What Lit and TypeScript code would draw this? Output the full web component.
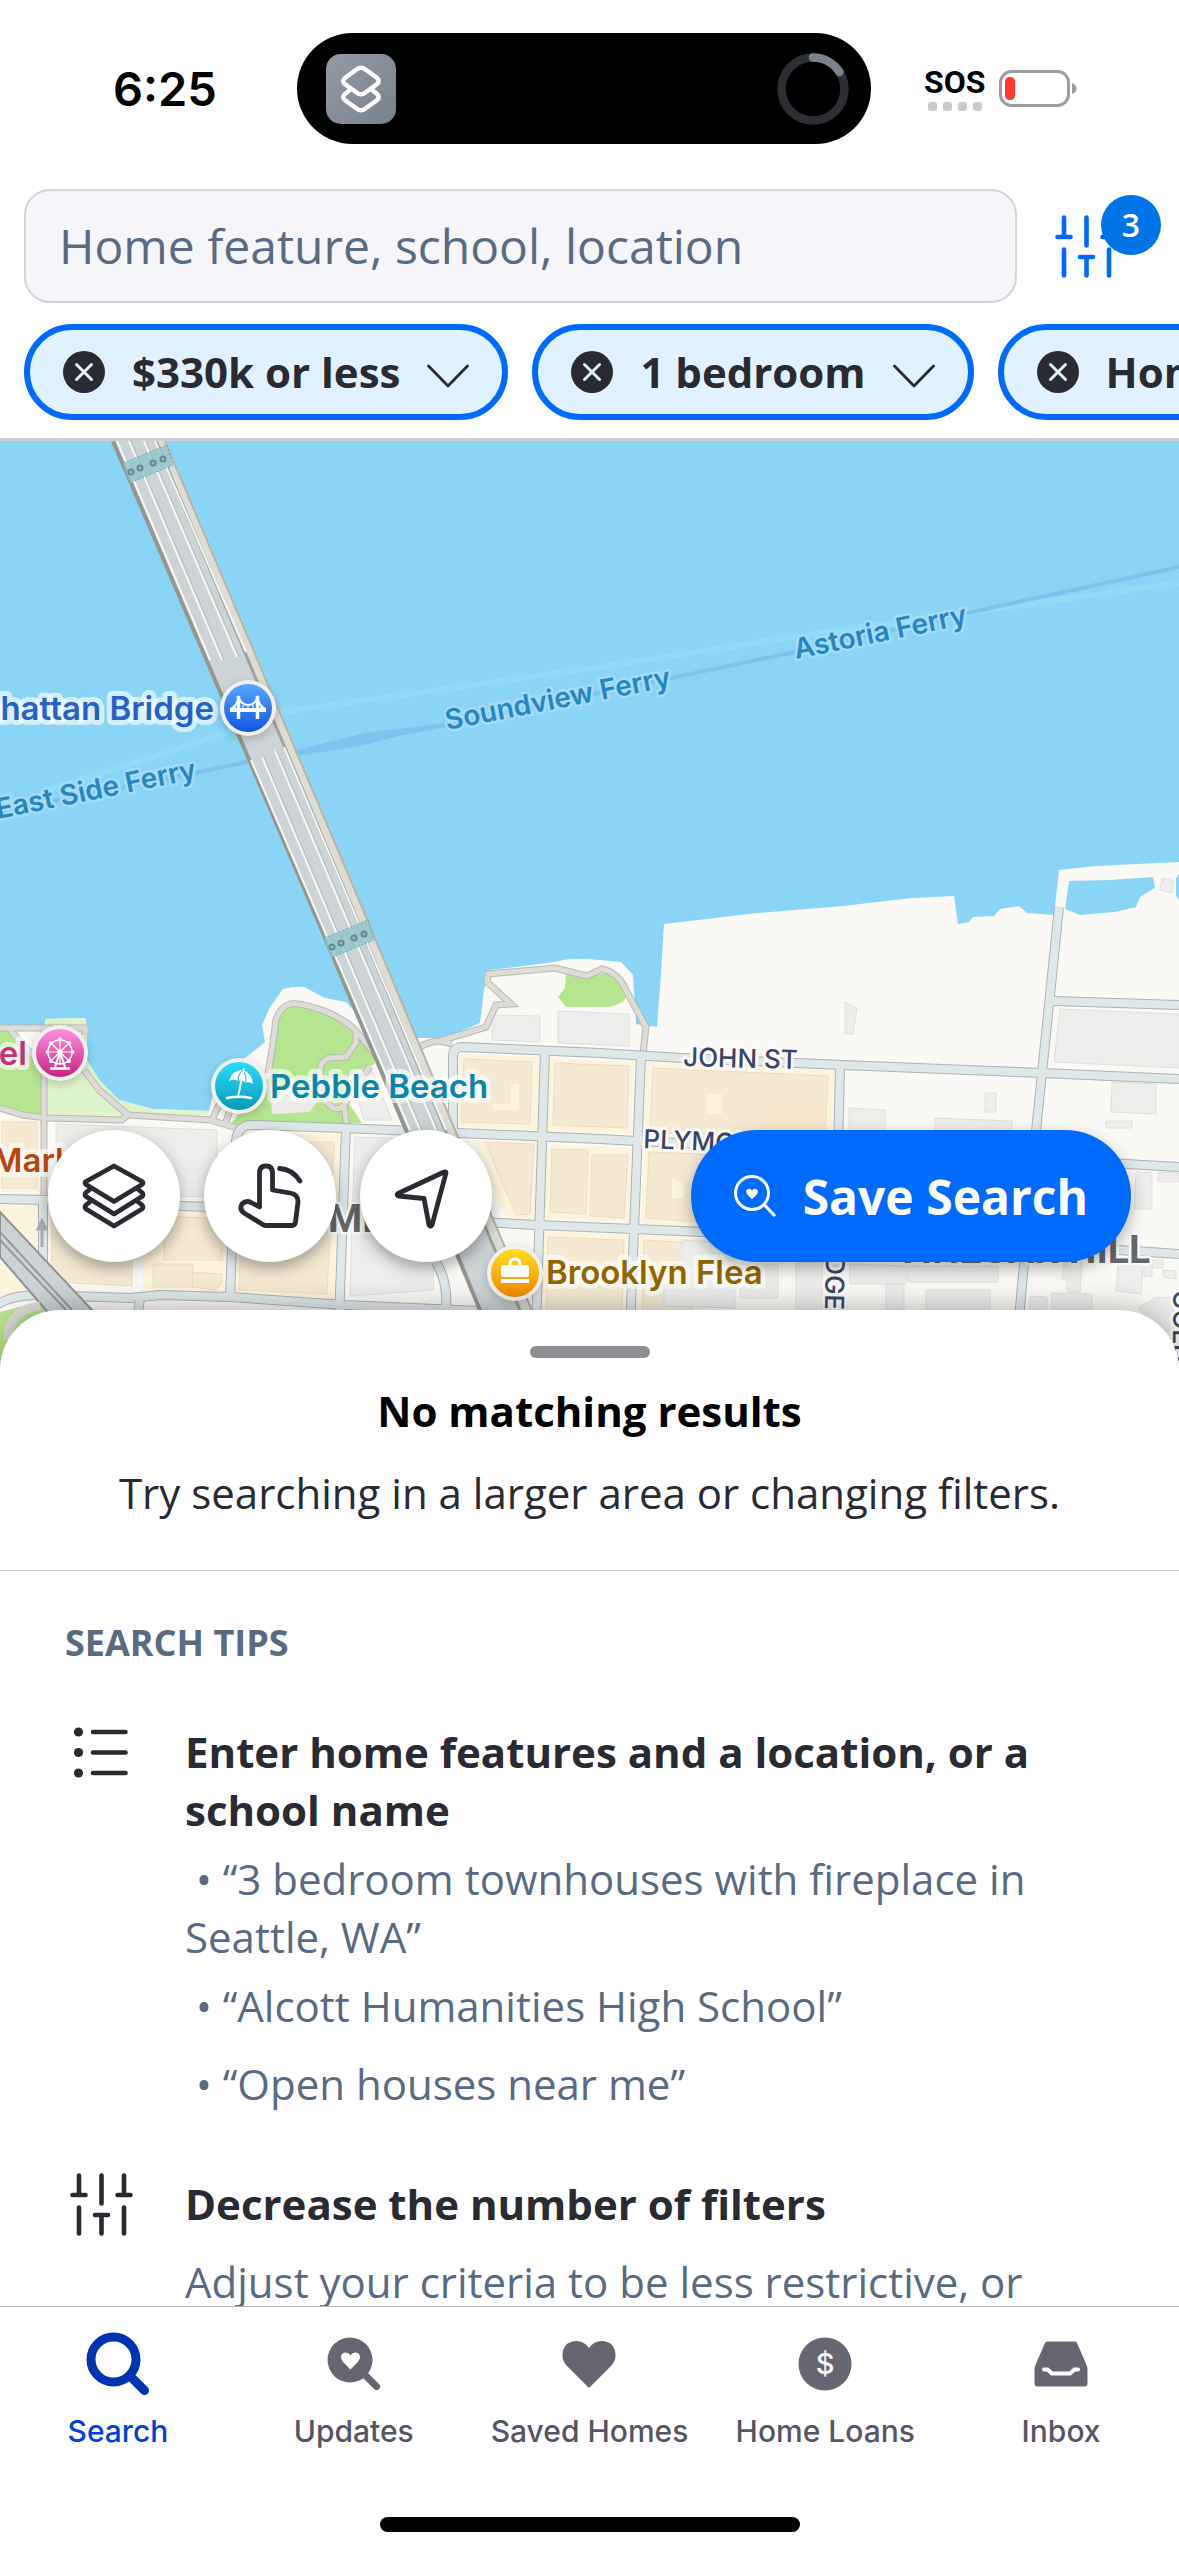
import { LitElement, html, svg, css } from "lit";
import { customElement, property } from "lit/decorators.js";

const HEART = "M0 8.5 C-3 5 -9.5 0 -9.5 -3.8 C-9.5 -9.3 -2.2 -10 0 -5.2 C2.2 -10 9.5 -9.3 9.5 -3.8 C9.5 0 3 5 0 8.5Z";

const slidersIcon = html`
  <svg class="sliders" viewBox="0 0 63 63" aria-hidden="true">
    <path d="M9 2.5V21M2.5 22H15.500M9 34.500V60.500M31.500 2.500V30.500M25 42H38M31.500 42V60.500M54 2.500V21M47.500 22H60.500M54 34.500V60.500"
      fill="none" stroke="currentColor" stroke-width="4.600" stroke-linecap="round" />
  </svg>`;

const listIcon = html`
  <svg class="list-icon" viewBox="0 0 63 63" aria-hidden="true">
    <g fill="currentColor">
      <circle cx="8.500" cy="11" r="4.600" /><circle cx="8.500" cy="31.500" r="4.600" /><circle cx="8.500" cy="52" r="4.600" />
    </g>
    <path d="M23 11H55.500M23 31.500H55.500M23 52H55.500" stroke="currentColor" stroke-width="4.600" stroke-linecap="round" />
  </svg>`;

/* ---------- map ---------- */

const STREETS = [
  "M453 1145V1056Q453 1047 463 1047L600 1053L682 1058L843 1065L1042 1073L1179 1079",
  "M236 1150Q234 1125 252 1125L344 1128L459 1133L600 1139L636 1141L1126 1164L1179 1167",
  "M0 1199L46 1200L230 1208L344 1214L536 1225L634 1229L1119 1250L1179 1254",
  "M-5 1306Q10 1295 40 1295L130 1298L160 1295L230 1297L344 1305L480 1311",
  "M43 1200V1295",
  "M236 1145L230 1298",
  "M346 1128L339 1320",
  "M545 1051L536 1330",
  "M641 1057L630 1330",
  "M840 1065L834 1330",
  "M1059 907L1042 1073L1036 1131L1018 1330",
  "M1053 1001L1179 1005",
  "M436 1262Q448 1282 446 1308",
  "M140 1298L136 1330",
  "M1018 1380L1179 1386",
];

const PATHS = [
  "M0 1028H85V1035",
  "M44 1028V1195",
  "M10 1030L44 1068",
  "M84 1070L99 1090L128 1115L122 1120L46 1118L23 1115L0 1108",
  "M128 1115L210 1120L237 1128",
  "M212 1120L222 1098M225 1124L232 1105",
  "M268 1073L272 1050L276 1020Q280 1007 290 1004Q302 1002 329 1013Q348 1022 356 1031L380 1060",
  "M356 1031V1043L346 1057L329 1058Q320 1062 320 1070L322 1095Q334 1116 344 1105L370 1066M344 1105L347 1128",
  "M417 1050Q424 1042 440 1041L452 1044M440 1041L486 1027L496 1005L511 1004L487 982L488 974L555 968L587 976L602 969Q614 972 621 981L646 1027L643 1054",
];

const CREAM = [
  "M459 1054L540 1057L538 1131L457 1127Z",
  "M550 1058L634 1062L631 1134L548 1131Z",
  "M647 1062L835 1070L832 1144L644 1136Z",
  "M472 1140L538 1142L534 1219L512 1232Z",
  "M548 1145L634 1147L630 1222L544 1219Z",
  "M645 1147L830 1155L828 1232L641 1225Z",
  "M543 1231L628 1235L626 1320L540 1320Z",
  "M640 1235L700 1238L700 1320H636Z",
  "M238 1132L340 1134L334 1300L236 1294Z",
  "M50 1205L226 1213V1294L143 1292V1260H133V1286L50 1282Z",
  "M0 1203L38 1206V1260L0 1215Z",
  "M0 1262L28 1290L0 1298Z",
  "M0 1120L40 1122V1192L0 1192Z",
];

const TAN = [
  "M464 1059L532 1062L530 1124L461 1122Z",
  "M555 1063L629 1066L627 1128L553 1125Z",
  "M653 1068L828 1076L825 1140L650 1132Z",
  "M485 1142L534 1144L530 1214L516 1215Z",
  "M552 1149L588 1150L586 1214L550 1212Z",
  "M592 1155L628 1155L624 1218L590 1216Z",
  "M649 1152L760 1156L750 1226L646 1218Z",
  "M548 1237L624 1240L622 1316L546 1316Z",
  "M644 1240L692 1243V1316H642Z",
  "M242 1138L300 1140V1180H242Z",
  "M306 1142L334 1142L332 1190L306 1188Z",
  "M241 1212L331 1214L327 1294L239 1290Z",
  "M52 1216L132 1218V1286L52 1282Z",
  "M164 1216L222 1219V1260H164Z",
  "M153 1264L193 1264V1287L153 1287Z",
  "M193 1272L222 1274V1282L216 1290L192 1287Z",
  "M2 1122L37 1122V1188L2 1188Z",
];

const GREY = [
  "M56 1124L217 1130V1197L56 1194Z",
  "M355 1137L418 1139L430 1200L434 1290L350 1296L352 1220Z",
  "M492 1015L540 1016V1042L492 1040Z",
  "M558 1011L629 1014V1046L558 1043Z",
  "M845 1002L857 1008L853 1034H845Z",
  "M1060 1009L1179 1014V1068L1054 1062Z",
  "M849 1108L885 1110V1132H849Z",
  "M935 1118L1012 1121V1140H935Z",
  "M985 1093H996V1112H985Z",
  "M1112 1082L1156 1084V1114L1111 1112Z",
  "M1106 1121H1132V1128H1106Z",
  "M1136 1172L1152 1173V1209H1134Z",
  "M1158 1172L1179 1173V1182H1158Z",
  "M682 1240L735 1243V1308L664 1306V1284H682Z",
  "M850 1264L906 1266V1284H850Z",
  "M740 1264H778V1298H740ZM796 1262H822V1310H796Z",
  "M886 1284H904V1310H886ZM908 1266H998V1282H908ZM926 1290H990V1310H926Z",
  "M1064 1262H1082L1080 1292H1067V1280H1062ZM1052 1293L1092 1294V1320H1052ZM1030 1296L1047 1297V1312H1030Z",
  "M1118 1266L1143 1266L1141 1294L1116 1291ZM1144 1268L1152 1264V1276L1144 1277ZM1152 1260H1163V1268H1152ZM1163 1270L1176 1271V1279L1163 1277Z",
  "M1138 1308L1155 1298L1173 1297V1331H1160Z",
  "M358 1100L372 1070L392 1120H364Z",
  "M1162 878L1174 881L1172 893L1160 890Z",
];

function place(x: number, y: number, id: string, glyph: unknown) {
  return svg`
    <g transform="translate(${x} ${y})">
      <circle r="29" fill="#000" opacity=".16" cy="3" filter="url(#soft)" />
      <circle r="28" fill="#f0f0ee" />
      <circle r="24" fill="url(#${id})" />
      ${glyph}
    </g>`;
}

const gradient = (id: string, a: string, b: string) => svg`
  <linearGradient id=${id} x1="0" y1="0" x2="0" y2="1">
    <stop offset="0" stop-color=${a} /><stop offset="1" stop-color=${b} />
  </linearGradient>`;

const tower = (x: number, y: number) => svg`
  <g transform="translate(${x} ${y})">
    <path d="M-24 -4L20 -22L26 -2L-17 16Z" fill="#93c5cb" opacity=".85" />
    <path d="M-24 -4L20 -22L26 -2L-17 16Z" fill="none" stroke="#6fa9b2" stroke-width="1" stroke-dasharray="2 2" />
    <g fill="#9fb9bd" stroke="#5f8b93" stroke-width="2">
      <circle cx="-16" cy="5" r="2.500" /><circle cx="-7" cy="1" r="2.500" /><circle cx="6" cy="-4" r="2.500" /><circle cx="16" cy="-8" r="2.500" />
    </g>
  </g>`;

@customElement("area-map")
export class AreaMap extends LitElement {
  static styles = css`
    :host { display: block; }
    svg { display: block; width: 100%; height: 100%; }
    text { font-family: Inter, "Liberation Sans", sans-serif; paint-order: stroke; stroke-linejoin: round; }
    .ferry { font-size: 28px; font-weight: 600; fill: #2686be; stroke: #a3dcf7; stroke-width: 5px; }
    .poi { font-size: 33px; font-weight: 600; stroke: #ffffff; stroke-opacity: .65; stroke-width: 10px; }
    .street { font-size: 26px; font-weight: 500; fill: #3b4465; stroke: #fbfaf6; stroke-width: 6px; }
    .district { font-family: Roboto, "Liberation Sans", sans-serif; font-size: 39px; font-weight: 700; fill: #62686b; stroke: #fafafa; stroke-width: 5px; }
    .bridge { fill: #2660c8; }
    .beach { fill: #0a86aa; }
    .flea { fill: #8f6600; }
    .wheel { fill: #c0317f; }
    .market { fill: #b8470f; }
    .end { text-anchor: end; }
  `;

  render() {
    return html`
      <svg viewBox="0 441 1179 949" preserveAspectRatio="xMidYMin slice" role="img" aria-label="Map">
        <defs>
          ${gradient("g-bridge", "#58a6ff", "#1255e0")}
          ${gradient("g-beach", "#2cdcfb", "#0899b8")}
          ${gradient("g-flea", "#ffdc1c", "#ef8a00")}
          ${gradient("g-wheel", "#ff8fe0", "#c4247f")}
          <filter id="soft" x="-40%" y="-40%" width="180%" height="180%"><feGaussianBlur stdDeviation="4" /></filter>
        </defs>
        <rect y="441" width="1179" height="949" fill="#8ad5f5" />

        <path d="M40 792L200 742L283 712L600 667L793 637L1179 583" fill="none" stroke="#8fdcf6" stroke-width="6" />
        <path d="M0 812L199 772L297 752L446 725L600 693L795 652L967 613L1179 567" fill="none" stroke="#7cc3ee" stroke-width="4" />
        <path d="M297 750L365 733L446 723L365 745L297 756Z" fill="#7cc3ee" />

        <path fill="#faf9f5" d="M0 1026H44L46 1019L86 1018L87 1060L99 1080L119 1100L153 1109L209 1111L214 1090L230 1067L249 1055L265 1042L262 1025L270 1007L283 989L292 987H304L325 998L346 1002L380 1040L415 1038H446L480 1023L484 990L490 970L524 966L547 963L570 959H589L621 962L633 975L636 1024L657 1027L661 974L664 924L698 920L740 915L759 913L843 906L912 898L954 896L958 924L969 922L973 917L994 916L1000 909L1019 906L1027 913L1054 915L1059 870L1096 866L1179 862V1390H0Z" />
        <path fill="#8ad5f5" d="M1069 881L1110 880L1153 877L1155 888L1148 892L1140 897L1136 907L1115 912L1080 915L1065 909ZM1179 874L1176 878V896L1179 900Z" />
        <path fill="#dff4cb" d="M46 1019L86 1018L87 1060L99 1080L119 1100L153 1109L209 1111L206 1121L130 1118L44 1120V1028Z" />
        <g fill="#b6e58f">
          <path d="M0 1030H11L43 1067V1115L0 1108Z" />
          <path d="M270 1076L272 1050L278 1018Q284 1005 302 1004L329 1014L352 1028L372 1052L375 1064L350 1075L344 1096L362 1123L250 1124L230 1125L240 1112Z" />
          <path d="M566 973L587 977L606 973L621 984L627 995L623 1002L610 1007H566L558 997L565 988Z" />
          <path d="M0 1312L46 1300L60 1390H0Z" />
        </g>
        <path fill="#edebe8" d="M270 1085L318 1100L310 1112L272 1114Z" />

        <g fill="#fdf4dc">${CREAM.map((d) => svg`<path d=${d} />`)}</g>
        <g fill="#f5e9d3" stroke="#ecdcc0" stroke-width="1">${TAN.map((d) => svg`<path d=${d} />`)}</g>
        <path fill="#f8e7cd" d="M775 1104L826 1107L824 1140H766V1120H775Z" />
        <path fill="#fdf4dc" d="M511 1084H519V1110H493V1104H511ZM706 1094H722V1114H706ZM672 1178L684 1184V1198H672Z" />
        <g fill="#ededeb" stroke="#dfdfdd" stroke-width="1">${GREY.map((d) => svg`<path d=${d} />`)}</g>

        <g fill="none" stroke="#b9b8b3" stroke-width="7">${PATHS.map((d) => svg`<path d=${d} />`)}</g>
        <g fill="none" stroke="#dedcd7" stroke-width="5">${PATHS.map((d) => svg`<path d=${d} />`)}</g>
        <g fill="none" stroke="#a9b4b7" stroke-width="10">${STREETS.map((d) => svg`<path d=${d} />`)}</g>
        <g fill="none" stroke="#e0e7e8" stroke-width="8">${STREETS.map((d) => svg`<path d=${d} />`)}</g>

        <path d="M0 1212L92 1310L140 1370H100L46 1310L0 1257Z" fill="#cdd3d5" stroke="#8f9497" stroke-width="2" />
        <path d="M0 1232L72 1310M0 1240L66 1310" stroke="#98999b" stroke-width="2" />
        <path d="M42 1247V1222M38 1229L42 1221L46 1229Z" stroke="#a7adaf" stroke-width="3" fill="#a7adaf" />
        <path d="M8 1340Q8 1310 40 1306" fill="none" stroke="#dedcd7" stroke-width="9" />

        <path d="M114 441L310 900L406 1130L484 1320L536 1320L453 1130L360 900L166 441Z" fill="#cdd4d5" />
        <path d="M160 441L354 900L450 1130L530 1320" fill="none" stroke="#dddcd5" stroke-width="9" />
        <path d="M165 441L359 900L455 1130L536 1320" fill="none" stroke="#b5b3aa" stroke-width="2" />
        <path d="M156 441L349 900L445 1130L524 1320" fill="none" stroke="#9fa3a2" stroke-width="3" />
        <path d="M113 441L309 900L406 1130L484 1320" fill="none" stroke="#96968f" stroke-width="4" />
        <path d="M117 441L210 660M129 441L222 660M144 441L237 657M155 441L246 652M251 760L410 1130M262 757L420 1130M275 751L436 1130M284 747L446 1130"
          stroke="#f6f8f8" stroke-width="2" />
        <path d="M131 441L224 660M146 441L239 657M264 757L422 1130M277 751L438 1130" stroke="#b6bcbc" stroke-width="1" />
        ${tower(147, 467)} ${tower(348, 942)}

        <text class="ferry" transform="translate(-2 819) rotate(-11.500)">East Side Ferry</text>
        <text class="ferry" transform="translate(447 730) rotate(-11)">Soundview Ferry</text>
        <text class="ferry" transform="translate(796 659) rotate(-11.500)">Astoria Ferry</text>

        <text class="street" transform="translate(683 1066) rotate(1.500)">JOHN ST</text>
        <text class="street" transform="translate(643 1148) rotate(2.500)">PLYMOUTH ST</text>
        <text class="street end" transform="translate(825 1310) rotate(91)">BRIDGE</text>
        <text class="street" transform="translate(1173 1290) rotate(90)">GOLD ST</text>
        <text class="district" x="277" y="1232">DUMBO</text>
        <text class="district end" x="1150" y="1263">VINEGAR HILL</text>

        <text class="poi bridge end" x="214" y="720">Manhattan Bridge</text>
        <text class="poi wheel end" x="27" y="1065">Carousel</text>
        <text class="poi market" x="-8" y="1172">Market</text>
        <text class="poi beach" x="270" y="1098">Pebble Beach</text>
        <text class="poi flea" x="546" y="1284">Brooklyn Flea</text>

        ${place(248, 708, "g-bridge", svg`
          <path d="M-18 2H18" stroke="#fff" stroke-width="4" />
          <path d="M-9.500 -12V11M9.500 -12V11" stroke="#fff" stroke-width="3.500" />
          <path d="M-17 1Q-11 -3 -9.500 -10Q-6 -3 0 -3Q6 -3 9.500 -10Q11 -3 17 1" fill="none" stroke="#fff" stroke-width="2" />
          <path d="M-5 -3V2M0 -2V2M5 -3V2M-13 -2V2M13 -2V2" stroke="#fff" stroke-width="1.200" />`)}
        ${place(60, 1053, "g-wheel", svg`
          <g fill="none" stroke="#fff">
            <circle r="12" cy="-1" stroke-width="1.600" />
            <path d="M0 -14V12M-13 -1H13M-9 -10L9 8M9 -10L-9 8" stroke-width="1.200" />
            <path d="M0 -1L-5 14M0 -1L5 14" stroke-width="2.200" /><path d="M-10 15.500H10" stroke-width="2.600" />
          </g>
          <g fill="#fff"><circle r="2.600" cy="-1" /><circle cx="0" cy="-13.500" r="2" /><circle cx="12.500" cy="-1" r="2" /><circle cx="-12.500" cy="-1" r="2" /><circle cx="9" cy="-10" r="2" /><circle cx="-9" cy="-10" r="2" /><circle cx="9" cy="8" r="2" /><circle cx="-9" cy="8" r="2" /></g>`)}
        ${place(239, 1086, "g-beach", svg`
          <path d="M-10 -5Q-7 -16 4 -16Q13 -13 14 -2Q10 -5 7 -3Q3 -7 -1 -5Q-5 -8 -10 -5Z" fill="#fff" />
          <path d="M4 -16Q-1 -12 -1 -5M4 -16Q8 -10 7 -3" stroke="#15b6d3" stroke-width="1" fill="none" />
          <path d="M5 -18L-1 11" stroke="#fff" stroke-width="2" />
          <path d="M-12 12Q0 9.500 12 12" stroke="#fff" stroke-width="2.400" stroke-linecap="round" fill="none" />`)}
        ${place(515, 1273, "g-flea", svg`
          <path d="M-5 -6V-9Q-5 -14 0 -14Q5 -14 5 -9V-6" fill="none" stroke="#fff" stroke-width="3" />
          <rect x="-14" y="-8" width="28" height="12" rx="2" fill="#fff" /><rect x="-14" y="6" width="28" height="4" fill="#fff" />`)}
      </svg>`;
  }
}

/* ---------- filter chip ---------- */

@customElement("filter-chip")
export class FilterChip extends LitElement {
  @property() label = "";

  static styles = css`
    :host { display: block; flex: none; }
    .chip {
      display: flex; align-items: center; gap: 27px; box-sizing: border-box; height: 96px; padding: 0 33px;
      border: 6px solid #006aff; border-radius: 48px; background: #e0f2ff; color: #2a2a33;
    }
    button { display: flex; align-items: center; gap: 27px; margin: 0; padding: 0; border: 0; background: none; color: inherit; font: 700 42px/58px "Open Sans", "Noto Sans", sans-serif; white-space: nowrap; }
    svg { display: block; width: 42px; height: 42px; }
  `;

  render() {
    return html`
      <div class="chip">
        <button aria-label="Remove ${this.label}">
          <svg viewBox="0 0 42 42"><circle cx="21" cy="21" r="21" fill="currentColor" /><path d="M13.500 13.500L28.500 28.500M28.500 13.500L13.500 28.500" stroke="#e0f2ff" stroke-width="3" stroke-linecap="round" /></svg>
        </button>
        <button>
          ${this.label}
          <svg viewBox="0 0 42 42" aria-hidden="true"><path d="M1.500 15L21 35L40.500 15" fill="none" stroke="currentColor" stroke-width="2.800" stroke-linecap="round" stroke-linejoin="round" /></svg>
        </button>
      </div>`;
  }
}

/* ---------- screen ---------- */

const TABS = [
  { label: "Search", active: true, icon: svg`<circle cx="31.500" cy="31.500" r="22.500" fill="none" stroke="currentColor" stroke-width="9" /><path d="M48 48L62.500 62.500" stroke="currentColor" stroke-width="9" stroke-linecap="round" />` },
  { label: "Updates", icon: svg`<circle cx="32" cy="32" r="22.500" fill="currentColor" /><path d="M46 46L58.500 58.500" stroke="currentColor" stroke-width="7" stroke-linecap="round" /><path transform="translate(32.500 33)" d=${HEART} fill="#fff" />` },
  { label: "Saved Homes", icon: svg`<path fill="currentColor" d="M36 59.500Q35 59.500 33.500 57.500L14 38Q9.500 33 9.500 28Q9.500 13.500 23.500 13Q31 13 36 20Q41 13 48.500 13Q62.500 13.500 62.500 28Q62.500 33 58 38L38.500 57.500Q37 59.500 36 59.500Z" />` },
  { label: "Home Loans", icon: svg`<circle cx="36" cy="36" r="26.500" fill="currentColor" /><text x="36" y="46" text-anchor="middle" font-family="Inter, sans-serif" font-size="29" font-weight="500" fill="#fff">$</text>` },
  { label: "Inbox", icon: svg`<path fill="currentColor" d="M22 13.500H50Q51.500 13.500 52 15L62 38Q62.500 39 62.500 41V55.500Q62.500 58.500 59.500 58.500H12.500Q9.500 58.500 9.500 55.500V41Q9.500 39 10 38L20 15Q20.500 13.500 22 13.500Z" /><path d="M19 41.500H22.500L27 45.500H45L49.500 41.500H53" fill="none" stroke="#fff" stroke-width="4" stroke-linecap="round" />` },
];

const EXAMPLES = [
  "“3 bedroom townhouses with fireplace in Seattle, WA”",
  "“Alcott Humanities High School”",
  "“Open houses near me”",
];

@customElement("app-root")
export class AppRoot extends LitElement {
  static styles = css`
    :host { display: block; font-family: "Open Sans", "Noto Sans", sans-serif; color: #2a2a33; }
    svg { display: block; flex: none; }
    button { margin: 0; padding: 0; border: 0; background: none; color: inherit; font: inherit; }
    h1, h2, h3, p, ul { margin: 0; padding: 0; font-weight: inherit; }
    .screen { display: flex; flex-direction: column; height: 100vh; overflow: hidden; background: #fff; }

    .status { display: grid; grid-template-columns: 297fr 574fr 308fr; align-items: center; padding: 33px 0 45px; }
    .time { padding: 0 0 0 113px; font: 600 47px/58px Inter, sans-serif; color: #000; }
    .island { display: flex; align-items: center; justify-content: space-between; box-sizing: border-box; height: 111px; padding: 0 21px 0 29px; border-radius: 56px; background: #000; }
    .signal { display: flex; align-items: center; gap: 14px; padding-left: 53px; }
    .sos { display: flex; flex-direction: column; align-items: center; gap: 4px; font: 700 32px/32px Roboto, "Liberation Sans", sans-serif; color: #000; }
    .dots { display: flex; gap: 6px; }
    .dot { width: 9px; height: 9px; border-radius: 3px; background: #cacaca; }

    .search { display: flex; align-items: stretch; height: 114px; padding-left: 24px; }
    .field { flex: 1; min-width: 0; box-sizing: border-box; margin: 0; padding: 0 33px; border: 2px solid #d3d3d8; border-radius: 26px; background: #f5f5fa; font: 400 48px/66px "Open Sans", "Noto Sans", sans-serif; color: #2a2a33; outline: none; }
    .field::placeholder { color: #596b82; opacity: 1; }
    .filters { position: relative; display: flex; align-items: center; flex: none; width: 162px; padding-left: 38px; color: #006aff; }
    .sliders, .list-icon { width: 63px; height: 63px; }
    .badge { position: absolute; top: 6px; left: 84px; width: 60px; height: 60px; border-radius: 50%; background: #0073e6; color: #fff; font-size: 32px; font-weight: 600; line-height: 60px; text-align: center; }
    .chips { display: flex; gap: 24px; overflow: hidden; margin-top: 21px; padding: 0 0 18px 24px; border-bottom: 3px solid #cfcfd4; }

    .map { position: relative; flex: none; aspect-ratio: 1179 / 949; margin-bottom: -80px; overflow: hidden; }
    area-map { height: 100%; }
    .controls { position: absolute; left: 48px; right: 48px; bottom: 128px; display: flex; align-items: center; gap: 24px; }
    .round { width: 132px; height: 132px; border-radius: 50%; background: #fff; box-shadow: 0 6px 16px rgba(0, 0, 0, .35); }
    .round svg { width: 132px; height: 132px; }
    .save { display: flex; align-items: center; gap: 27px; height: 132px; margin-left: auto; padding: 0 43px; border-radius: 66px; background: #006aff; color: #fff; font-size: 48px; font-weight: 700; box-shadow: 0 6px 16px rgba(0, 0, 0, .3); }

    .sheet { position: relative; flex: 1; min-height: 0; overflow: hidden; padding-top: 36px; border-radius: 60px 60px 0 0; background: #fff; box-shadow: 0 0 30px rgba(0, 0, 0, .32); font-size: 42px; line-height: 58px; }
    .grip { width: 120px; height: 12px; margin: 0 auto 24px; border-radius: 6px; background: #8e8e93; }
    .summary { display: flex; flex-direction: column; gap: 24px; padding: 0 64px 48px; border-bottom: 1px solid #c6c6c8; text-align: center; }
    .summary h1 { font-size: 42px; font-weight: 700; color: #000; }
    .tips { padding: 48px 65px 0; }
    .tips h2 { margin-bottom: 56px; font-size: 36px; line-height: 48px; font-weight: 700; color: #596b82; }
    .tip { display: flex; gap: 48px; margin-bottom: 53px; }
    .mark { display: flex; align-items: center; justify-content: center; flex: none; width: 72px; height: 58px; }
    .body { display: flex; flex-direction: column; gap: 11px; }
    .body h3 { min-height: 67px; font-size: 42px; font-weight: 700; }
    .body ul { display: flex; flex-direction: column; gap: 11px; list-style: none; }
    .body li { min-height: 67px; white-space: pre-wrap; color: #596b82; }
    .body p { color: #596b82; }

    .tabs { position: relative; flex: none; border-top: 1px solid #b4b4b8; background: #fff; }
    .row { display: grid; grid-template-columns: repeat(5, 1fr); padding-top: 21px; }
    .tab { display: flex; flex-direction: column; align-items: center; gap: 13px; color: #666672; text-decoration: none; }
    .tab svg { width: 72px; height: 72px; }
    .name { font: 500 30px/36px Inter, sans-serif; color: #565564; white-space: nowrap; }
    .tab.on { color: #0033b0; }
    .tab.on .name { color: #0041d9; }
    .home { width: 420px; height: 15px; margin: 68px auto 24px; border-radius: 8px; background: #000; }
  `;

  private status() {
    return html`
      <div class="status">
        <div class="time">6:25</div>
        <div class="island">
          <svg width="70" height="70" viewBox="0 0 70 70">
            <defs><linearGradient id="tile" x1="0" y1="0" x2="1" y2="1"><stop offset="0" stop-color="#939ba6" /><stop offset="1" stop-color="#78828c" /></linearGradient></defs>
            <rect width="70" height="70" rx="15" fill="url(#tile)" />
            <g fill="none" stroke="#fff" stroke-width="4.600" stroke-linejoin="round">
              <path d="M24 36L19.500 39.500Q15 43 19.500 46.500L30.500 54.500Q35 58 39.500 54.500L50.500 46.500Q55 43 50.500 39.500L46 36" />
              <path d="M30.500 15.500Q35 12 39.500 15.500L50.500 23.500Q55 27 50.500 30.500L39.500 38.500Q35 42 30.500 38.500L19.500 30.500Q15 27 19.500 23.500Z" />
            </g>
          </svg>
          <svg width="74" height="74" viewBox="-37 -37 74 74" fill="none" stroke-width="8.500">
            <circle r="31.500" stroke="#2c3035" /><path d="M0 -31.500A31.500 31.500 0 0 1 26.500 -17" stroke="#78838e" stroke-linecap="round" />
          </svg>
        </div>
        <div class="signal">
          <div class="sos">SOS<div class="dots"><span class="dot"></span><span class="dot"></span><span class="dot"></span><span class="dot"></span></div></div>
          <svg width="80" height="38" viewBox="0 0 80 38">
            <rect x="1.500" y="1.500" width="68" height="34" rx="11" fill="none" stroke="#9c9c9c" stroke-width="3" />
            <rect x="6" y="7" width="10" height="23" rx="4.500" fill="#ff3b30" /><path d="M73 13Q77.500 15 77.500 18.500Q77.500 22 73 24Z" fill="#9c9c9c" />
          </svg>
        </div>
      </div>`;
  }

  private controls() {
    const line = (d: string) => svg`<path d=${d} fill="none" stroke="#2a2a33" stroke-width="4.800" stroke-linecap="round" stroke-linejoin="round" />`;
    return html`
      <div class="controls">
        <button class="round" aria-label="Map layers"><svg viewBox="0 0 132 132">
          ${line("M66 36L94 51.500Q96 53 94 54.500L66 71.500L38 54.500Q36 53 38 51.500Z")}
          ${line("M43 58.500L38 62.500Q36 65 38 66.500L66 84L94 66.500Q96 65 94 62.500L89 58.500")}
          ${line("M43 71L38 75Q36 77.500 38 79L66 96L94 79Q96 77.500 94 75L89 71")}
        </svg></button>
        <button class="round" aria-label="Draw area"><svg viewBox="0 0 132 132">
          ${line("M55.500 77V43Q55.500 36 62 36Q68.500 36 68.500 43V60L86 63Q94.500 64.500 94 72L91.500 92Q91 95.500 88 95.500H62Q60 95.500 58 94L40 83Q35 79 38 74Q42 70 47 72.500Z")}
          ${line("M75.500 38.500Q88 39 96 51")}
        </svg></button>
        <button class="round" aria-label="My location"><svg viewBox="0 0 132 132">
          ${line("M83 42.500L38 63.500Q36 65 38.500 66L64 68.500L69 95Q70.500 97.500 72 95L86 43Q86 41 83 42.500Z")}
        </svg></button>
        <button class="save">
          <svg width="42" height="42" viewBox="0 0 42 42" aria-hidden="true"><circle cx="18" cy="18" r="16.500" fill="none" stroke="#fff" stroke-width="3" /><path d="M31 30.500L40 40" stroke="#fff" stroke-width="3.200" stroke-linecap="round" /><path transform="translate(18 19) scale(.62)" d=${HEART} fill="#fff" /></svg>
          Save Search
        </button>
      </div>`;
  }

  render() {
    return html`
      <div class="screen">
        <header>
          ${this.status()}
          <div class="search">
            <input class="field" type="text" aria-label="Search homes" placeholder="Home feature, school, location" />
            <button class="filters" aria-label="Filters, 3 applied">${slidersIcon}<span class="badge">3</span></button>
          </div>
          <div class="chips">
            <filter-chip label="$330k or less"></filter-chip>
            <filter-chip label="1 bedroom"></filter-chip>
            <filter-chip label="Home type"></filter-chip>
          </div>
        </header>
        <section class="map"><area-map></area-map>${this.controls()}</section>
        <main class="sheet">
          <div class="grip"></div>
          <div class="summary">
            <h1>No matching results</h1>
            <p>Try searching in a larger area or changing filters.</p>
          </div>
          <section class="tips">
            <h2>SEARCH TIPS</h2>
            <div class="tip">
              <div class="mark">${listIcon}</div>
              <div class="body">
                <h3>Enter home features and a location, or a school name</h3>
                <ul>${EXAMPLES.map((t) => html`<li> • ${t}</li>`)}</ul>
              </div>
            </div>
            <div class="tip">
              <div class="mark">${slidersIcon}</div>
              <div class="body">
                <h3>Decrease the number of filters</h3>
                <p>Adjust your criteria to be less restrictive, or</p>
              </div>
            </div>
          </section>
        </main>
        <nav class="tabs">
          <div class="row">
            ${TABS.map((t) => html`
              <a class="tab ${t.active ? "on" : ""}" href="#">
                <svg viewBox="0 0 72 72" aria-hidden="true">${t.icon}</svg>
                <span class="name">${t.label}</span>
              </a>`)}
          </div>
          <div class="home"></div>
        </nav>
      </div>`;
  }
}
